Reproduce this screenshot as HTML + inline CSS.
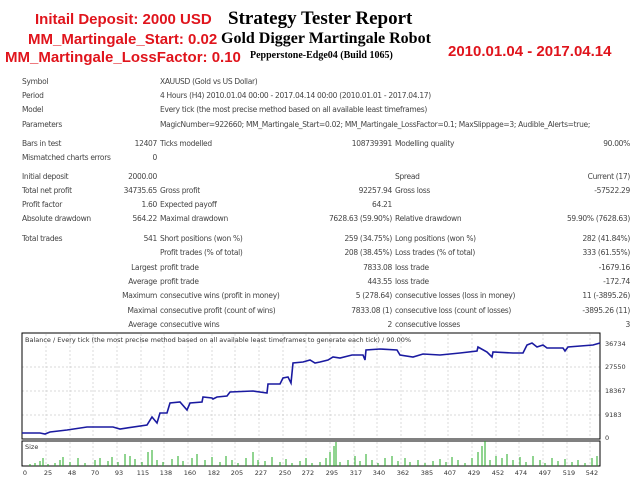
<!DOCTYPE html>
<html><head><meta charset="utf-8"><style>
body{margin:0;width:640px;height:480px;background:#fff;position:relative;overflow:hidden;font-family:Tahoma,"DejaVu Sans",sans-serif}
.r{position:absolute;color:#e0141c;font-family:"Liberation Sans",Arial,sans-serif;font-weight:bold;white-space:nowrap}
.s{position:absolute;color:#000;font-family:"Liberation Serif",serif;font-weight:bold;white-space:nowrap}
.t{position:absolute;font-size:7.5px;color:#444;white-space:nowrap;font-family:"DejaVu Sans",sans-serif;letter-spacing:-0.3px}
.rt{text-align:right}
</style></head><body>
<div class="r" style="left:35px;top:11px;font-size:15px">Initail Deposit: 2000 USD</div>
<div class="r" style="left:28px;top:31px;font-size:15px">MM_Martingale_Start: 0.02</div>
<div class="r" style="left:5px;top:49px;font-size:15px">MM_Martingale_LossFactor: 0.10</div>
<div class="r" style="left:448px;top:43px;font-size:15px">2010.01.04 - 2017.04.14</div>
<div class="s" style="left:228px;top:8px;font-size:19px">Strategy Tester Report</div>
<div class="s" style="left:221px;top:30px;font-size:16px">Gold Digger Martingale Robot</div>
<div class="s" style="left:250px;top:50px;font-size:10px">Pepperstone-Edge04 (Build 1065)</div>

<div class="t" style="left:22px;top:77px">Symbol</div><div class="t" style="left:160px;top:77px">XAUUSD (Gold vs US Dollar)</div>
<div class="t" style="left:22px;top:91px">Period</div><div class="t" style="left:160px;top:91px">4 Hours (H4) 2010.01.04 00:00 - 2017.04.14 00:00 (2010.01.01 - 2017.04.17)</div>
<div class="t" style="left:22px;top:105px">Model</div><div class="t" style="left:160px;top:105px">Every tick (the most precise method based on all available least timeframes)</div>
<div class="t" style="left:22px;top:120px">Parameters</div><div class="t" style="left:160px;top:120px">MagicNumber=922660; MM_Martingale_Start=0.02; MM_Martingale_LossFactor=0.1; MaxSlippage=3; Audible_Alerts=true;</div>

<div class="t" style="left:22px;top:139px">Bars in test</div><div class="t rt" style="right:483px;top:139px">12407</div><div class="t" style="left:160px;top:139px">Ticks modelled</div><div class="t rt" style="right:248px;top:139px">108739391</div><div class="t" style="left:395px;top:139px">Modelling quality</div><div class="t rt" style="right:10px;top:139px">90.00%</div>
<div class="t" style="left:22px;top:153px">Mismatched charts errors</div><div class="t rt" style="right:483px;top:153px">0</div>

<div class="t" style="left:22px;top:172px">Initial deposit</div><div class="t rt" style="right:483px;top:172px">2000.00</div><div class="t" style="left:395px;top:172px">Spread</div><div class="t rt" style="right:10px;top:172px">Current (17)</div>
<div class="t" style="left:22px;top:186px">Total net profit</div><div class="t rt" style="right:483px;top:186px">34735.65</div><div class="t" style="left:160px;top:186px">Gross profit</div><div class="t rt" style="right:248px;top:186px">92257.94</div><div class="t" style="left:395px;top:186px">Gross loss</div><div class="t rt" style="right:10px;top:186px">-57522.29</div>
<div class="t" style="left:22px;top:200px">Profit factor</div><div class="t rt" style="right:483px;top:200px">1.60</div><div class="t" style="left:160px;top:200px">Expected payoff</div><div class="t rt" style="right:248px;top:200px">64.21</div>
<div class="t" style="left:22px;top:214px">Absolute drawdown</div><div class="t rt" style="right:483px;top:214px">564.22</div><div class="t" style="left:160px;top:214px">Maximal drawdown</div><div class="t rt" style="right:248px;top:214px">7628.63 (59.90%)</div><div class="t" style="left:395px;top:214px">Relative drawdown</div><div class="t rt" style="right:10px;top:214px">59.90% (7628.63)</div>

<div class="t" style="left:22px;top:234px">Total trades</div><div class="t rt" style="right:483px;top:234px">541</div><div class="t" style="left:160px;top:234px">Short positions (won %)</div><div class="t rt" style="right:248px;top:234px">259 (34.75%)</div><div class="t" style="left:395px;top:234px">Long positions (won %)</div><div class="t rt" style="right:10px;top:234px">282 (41.84%)</div>
<div class="t" style="left:160px;top:248px">Profit trades (% of total)</div><div class="t rt" style="right:248px;top:248px">208 (38.45%)</div><div class="t" style="left:395px;top:248px">Loss trades (% of total)</div><div class="t rt" style="right:10px;top:248px">333 (61.55%)</div>
<div class="t rt" style="right:483px;top:263px">Largest</div><div class="t" style="left:160px;top:263px">profit trade</div><div class="t rt" style="right:248px;top:263px">7833.08</div><div class="t" style="left:395px;top:263px">loss trade</div><div class="t rt" style="right:10px;top:263px">-1679.16</div>
<div class="t rt" style="right:483px;top:277px">Average</div><div class="t" style="left:160px;top:277px">profit trade</div><div class="t rt" style="right:248px;top:277px">443.55</div><div class="t" style="left:395px;top:277px">loss trade</div><div class="t rt" style="right:10px;top:277px">-172.74</div>
<div class="t rt" style="right:483px;top:291px">Maximum</div><div class="t" style="left:160px;top:291px">consecutive wins (profit in money)</div><div class="t rt" style="right:248px;top:291px">5 (278.64)</div><div class="t" style="left:395px;top:291px">consecutive losses (loss in money)</div><div class="t rt" style="right:10px;top:291px">11 (-3895.26)</div>
<div class="t rt" style="right:483px;top:306px">Maximal</div><div class="t" style="left:160px;top:306px">consecutive profit (count of wins)</div><div class="t rt" style="right:248px;top:306px">7833.08 (1)</div><div class="t" style="left:395px;top:306px">consecutive loss (count of losses)</div><div class="t rt" style="right:10px;top:306px">-3895.26 (11)</div>
<div class="t rt" style="right:483px;top:320px">Average</div><div class="t" style="left:160px;top:320px">consecutive wins</div><div class="t rt" style="right:248px;top:320px">2</div><div class="t" style="left:395px;top:320px">consecutive losses</div><div class="t rt" style="right:10px;top:320px">3</div>

<svg width="640" height="480" style="position:absolute;left:0;top:0" font-family="DejaVu Sans,sans-serif" font-size="7" fill="#333">
<g stroke="#ccc" stroke-dasharray="2,2" stroke-width="0.7">
<path d="M22 367H600M22 391H600M22 415H600"/>
<path d="M46 334V438M70 334V438M93 334V438M117 334V438M141 334V438M164 334V438M188 334V438M212 334V438M235 334V438M259 334V438M283 334V438M306 334V438M330 334V438M354 334V438M377 334V438M401 334V438M425 334V438M448 334V438M472 334V438M496 334V438M519 334V438M543 334V438M567 334V438M590 334V438"/>
<path d="M46 442V466M70 442V466M93 442V466M117 442V466M141 442V466M164 442V466M188 442V466M212 442V466M235 442V466M259 442V466M283 442V466M306 442V466M330 442V466M354 442V466M377 442V466M401 442V466M425 442V466M448 442V466M472 442V466M496 442V466M519 442V466M543 442V466M567 442V466M590 442V466"/>
</g>
<rect x="22" y="333" width="578" height="106" fill="none" stroke="#000" stroke-width="1"/>
<rect x="22" y="441" width="578" height="25" fill="none" stroke="#000" stroke-width="1"/>
<text x="25" y="342" font-size="6.5">Balance / Every tick (the most precise method based on all available least timeframes to generate each tick) / 90.00%</text>
<text x="25" y="449" font-size="6.5">Size</text>
<polyline fill="none" stroke="#1a1aa0" stroke-width="1.6" points="22,433 40,433 45,434 50,432 67,430 87,427 113,427 120,429 147,425 152,417 157,423 160,413 167,413 170,403 180,402 187,410 190,403 202,402 203,397 212,398 213,399 217,397 227,396 230,392 253,391 267,393 268,384 280,384 283,378 288,377 291,383 293,363 303,362 310,360 315,363 320,362 328,360 333,357 340,358 352,355 363,355 365,360 366,350 380,349 397,350 400,355 413,357 423,354 440,355 460,353 477,351 478,347 487,352 492,357 493,352 513,353 523,353 527,345 532,343 537,347 543,345 547,348 563,348 565,351 568,347 593,345 600,343"/>
<g stroke="#22aa22" stroke-width="1">
<path d="M30 466v-2M35 466v-3M40 466v-5M43 466v-8M48 466v-2M55 466v-3M60 466v-6M63 466v-9M70 466v-4M78 466v-8M85 466v-3M95 466v-6M100 466v-8M108 466v-5M112 466v-9M118 466v-4M125 466v-12M130 466v-10M135 466v-7M142 466v-4M148 466v-14M152 466v-16M157 466v-6M163 466v-4M172 466v-7M178 466v-10M183 466v-5M192 466v-8M197 466v-12M205 466v-6M212 466v-9M220 466v-4M226 466v-10M232 466v-6M238 466v-3M246 466v-8M253 466v-14M258 466v-6M265 466v-5M272 466v-9M280 466v-4M286 466v-7M292 466v-3M300 466v-5M306 466v-8M312 466v-3M320 466v-4M326 466v-8M330 466v-14M334 466v-20M336 466v-24M340 466v-4M348 466v-6M355 466v-10M360 466v-5M366 466v-12M372 466v-6M378 466v-3M385 466v-8M392 466v-10M398 466v-5M405 466v-8M410 466v-4M418 466v-6M425 466v-3M433 466v-5M440 466v-7M446 466v-4M452 466v-9M458 466v-6M465 466v-3M472 466v-8M478 466v-14M482 466v-20M485 466v-25M490 466v-6M496 466v-10M502 466v-8M507 466v-12M513 466v-6M520 466v-9M526 466v-4M533 466v-10M540 466v-6M545 466v-3M552 466v-8M558 466v-5M565 466v-7M572 466v-4M578 466v-6M585 466v-3M592 466v-8M597 466v-10"/>
</g>
<g font-size="6.5">
<text x="605" y="346">36734</text><text x="605" y="369">27550</text><text x="605" y="393">18367</text><text x="605" y="417">9183</text><text x="605" y="440">0</text>
</g>
<g font-size="6.5" text-anchor="middle">
<text x="25" y="475">0</text><text x="48" y="475">25</text><text x="72" y="475">48</text><text x="95" y="475">70</text><text x="119" y="475">93</text><text x="143" y="475">115</text><text x="166" y="475">138</text><text x="190" y="475">160</text><text x="214" y="475">182</text><text x="237" y="475">205</text><text x="261" y="475">227</text><text x="285" y="475">250</text><text x="308" y="475">272</text><text x="332" y="475">295</text><text x="356" y="475">317</text><text x="379" y="475">340</text><text x="403" y="475">362</text><text x="427" y="475">385</text><text x="450" y="475">407</text><text x="474" y="475">429</text><text x="498" y="475">452</text><text x="521" y="475">474</text><text x="545" y="475">497</text><text x="569" y="475">519</text><text x="592" y="475">542</text>
</g>
</svg>
</body></html>
